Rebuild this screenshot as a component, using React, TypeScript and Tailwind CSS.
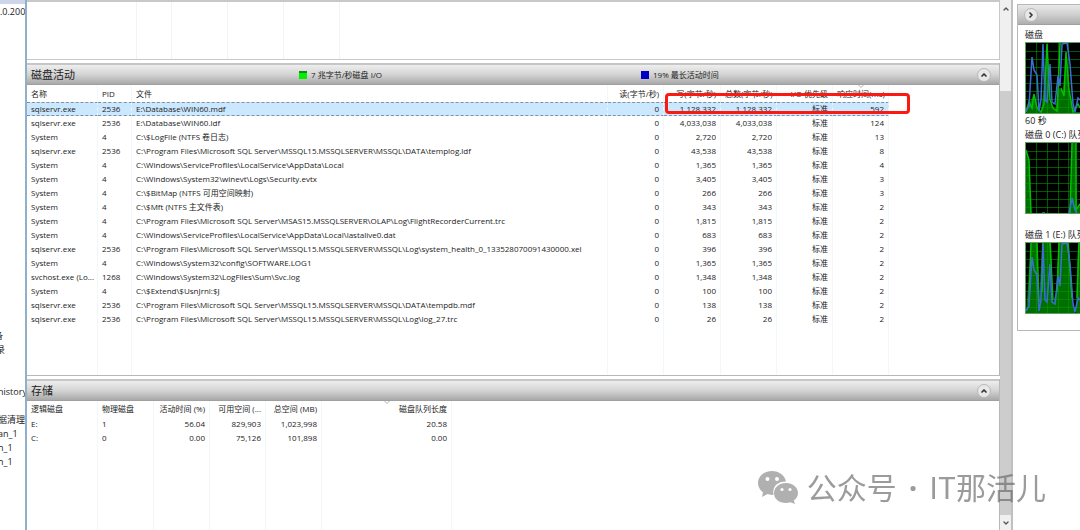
import { ChevronDown, ChevronRight, ChevronUp } from 'lucide-react'

type Activity = {
  name: string
  pid: string
  file: string
  write: string
  time: string
}

const activities: Activity[] = [
  { name: 'sqlservr.exe', pid: '2536', file: 'E:\\Database\\WIN60.mdf', write: '1,128,332', time: '592' },
  { name: 'sqlservr.exe', pid: '2536', file: 'E:\\Database\\WIN60.ldf', write: '4,033,038', time: '124' },
  { name: 'System', pid: '4', file: 'C:\\$LogFile (NTFS 卷日志)', write: '2,720', time: '13' },
  { name: 'sqlservr.exe', pid: '2536', file: 'C:\\Program Files\\Microsoft SQL Server\\MSSQL15.MSSQLSERVER\\MSSQL\\DATA\\templog.ldf', write: '43,538', time: '8' },
  { name: 'System', pid: '4', file: 'C:\\Windows\\ServiceProfiles\\LocalService\\AppData\\Local', write: '1,365', time: '4' },
  { name: 'System', pid: '4', file: 'C:\\Windows\\System32\\winevt\\Logs\\Security.evtx', write: '3,405', time: '3' },
  { name: 'System', pid: '4', file: 'C:\\$BitMap (NTFS 可用空间映射)', write: '266', time: '3' },
  { name: 'System', pid: '4', file: 'C:\\$Mft (NTFS 主文件表)', write: '343', time: '2' },
  { name: 'System', pid: '4', file: 'C:\\Program Files\\Microsoft SQL Server\\MSAS15.MSSQLSERVER\\OLAP\\Log\\FlightRecorderCurrent.trc', write: '1,815', time: '2' },
  { name: 'System', pid: '4', file: 'C:\\Windows\\ServiceProfiles\\LocalService\\AppData\\Local\\lastalive0.dat', write: '683', time: '2' },
  { name: 'sqlservr.exe', pid: '2536', file: 'C:\\Program Files\\Microsoft SQL Server\\MSSQL15.MSSQLSERVER\\MSSQL\\Log\\system_health_0_133528070091430000.xel', write: '396', time: '2' },
  { name: 'System', pid: '4', file: 'C:\\Windows\\System32\\config\\SOFTWARE.LOG1', write: '1,365', time: '2' },
  { name: 'svchost.exe (Lo...', pid: '1268', file: 'C:\\Windows\\System32\\LogFiles\\Sum\\Svc.log', write: '1,348', time: '2' },
  { name: 'System', pid: '4', file: 'C:\\$Extend\\$UsnJrnl:$J', write: '100', time: '2' },
  { name: 'sqlservr.exe', pid: '2536', file: 'C:\\Program Files\\Microsoft SQL Server\\MSSQL15.MSSQLSERVER\\MSSQL\\DATA\\tempdb.mdf', write: '138', time: '2' },
  { name: 'sqlservr.exe', pid: '2536', file: 'C:\\Program Files\\Microsoft SQL Server\\MSSQL15.MSSQLSERVER\\MSSQL\\Log\\log_27.trc', write: '26', time: '2' },
]

const volumes = [
  ['E:', '1', '56.04', '829,903', '1,023,998', '20.58'],
  ['C:', '0', '0.00', '75,126', '101,898', '0.00'],
]

const cell = 'border-r border-[#f1f7fa] px-1 whitespace-nowrap overflow-hidden font-normal'

function RoundButton({ label }: { label: string }) {
  return (
    <button
      aria-label={label}
      className="flex size-3.5 items-center justify-center rounded-full border border-[#b8b8b8] bg-[#e8e8e8]"
    >
      <ChevronUp className="size-2 text-[#333]" strokeWidth={5} />
    </button>
  )
}

function SectionHeader({ title, children }: { title: string; children?: React.ReactNode }) {
  return (
    <div className="grid h-[22px] shrink-0 grid-cols-[268px_342px_1fr_auto] items-center border-t-2 border-b border-t-[#c6c6c6] border-b-[#a0a0a0] bg-linear-to-b from-[#eeeeee] via-[#d4d4d4] to-[#a9a9a9] pr-2 pl-1 text-[#222]">
      <h2 className="text-[11px] leading-4">{title}</h2>
      {children ?? (
        <>
          <span />
          <span />
        </>
      )}
      <RoundButton label={`折叠${title}`} />
    </div>
  )
}

function SortMark() {
  return (
    <svg className="absolute top-0 left-1/2 h-1 w-2 -translate-x-1/2" viewBox="0 0 8 4" fill="none" stroke="#b5b5b5">
      <path d="M1.5 0 4 2.5 6.5 0" />
    </svg>
  )
}

function ActivityTable() {
  return (
    <table className="h-full w-full table-fixed border-separate border-spacing-0 text-[8px] leading-[14px]">
      <colgroup>
        <col className="w-[71px]" />
        <col className="w-[34px]" />
        <col className="w-[476px]" />
        <col className="w-14" />
        <col className="w-[57px]" />
        <col className="w-14" />
        <col className="w-14" />
        <col className="w-14" />
        <col />
      </colgroup>
      <thead>
        <tr className="h-[17px]">
          <th className={`${cell} text-left`}>名称</th>
          <th className={`${cell} text-left`}>PID</th>
          <th className={`${cell} text-left`}>文件</th>
          <th className={`${cell} text-right`}>读(字节/秒)</th>
          <th className={`${cell} text-right`}>写(字节/秒)</th>
          <th className={`${cell} text-right`}>总数(字节/秒)</th>
          <th className={`${cell} text-right`}>I/O 优先级</th>
          <th className={`${cell} relative text-right`}>
            <SortMark />
            响应时间(ms)
          </th>
          <th />
        </tr>
      </thead>
      <tbody>
        {activities.map((a, i) => {
          const td = i === 0 ? `${cell} border-y border-y-[#7d93a8] border-dashed bg-[#cce8ff] leading-3` : cell
          return (
            <tr key={i} className="h-[14px]">
              <td className={td}>{a.name}</td>
              <td className={td}>{a.pid}</td>
              <td className={td}>{a.file}</td>
              <td className={`${td} text-right`}>0</td>
              <td className={`${td} text-right`}>{a.write}</td>
              <td className={`${td} text-right`}>{a.write}</td>
              <td className={`${td} text-right`}>标准</td>
              <td className={`${td} text-right`}>{a.time}</td>
              <td />
            </tr>
          )
        })}
        <tr aria-hidden="true">
          {[0, 1, 2, 3, 4, 5, 6, 7].map((n) => (
            <td key={n} className={cell} />
          ))}
          <td />
        </tr>
      </tbody>
    </table>
  )
}

function StorageTable() {
  const heads = ['逻辑磁盘', '物理磁盘', '活动时间 (%)', '可用空间 (...', '总空间 (MB)', '磁盘队列长度']
  return (
    <table className="h-full w-full table-fixed border-separate border-spacing-0 text-[8px] leading-[14px]">
      <colgroup>
        <col className="w-[71px]" />
        <col className="w-14" />
        <col className="w-14" />
        <col className="w-14" />
        <col className="w-14" />
        <col className="w-[130px]" />
        <col />
      </colgroup>
      <thead>
        <tr className="h-4">
          {heads.map((h, i) => (
            <th key={h} className={`${cell} ${i < 2 ? 'text-left' : 'text-right'} ${i === 5 ? 'relative' : ''}`}>
              {i === 5 && <SortMark />}
              {h}
            </th>
          ))}
          <th />
        </tr>
      </thead>
      <tbody>
        {volumes.map((row) => (
          <tr key={row[0]} className="h-[14px]">
            {row.map((v, i) => (
              <td key={i} className={`${cell} ${i < 2 ? 'text-left' : 'text-right'}`}>{v}</td>
            ))}
            <td />
          </tr>
        ))}
        <tr aria-hidden="true">
          {heads.map((h) => (
            <td key={h} className={cell} />
          ))}
          <td />
        </tr>
      </tbody>
    </table>
  )
}

function Graph({ area, green, blue }: { area: string; green: string; blue: string }) {
  return (
    <svg className="block h-[72px] w-[55px]" viewBox="0 0 55 72" fill="none">
      <rect width="55" height="72" fill="#000" />
      <path d={area} fill="#006e00" />
      <path
        d="M1 9.5H55M1 17.5H55M1 25.5H55M1 33.5H55M1 41.5H55M1 49.5H55M1 57.5H55M1 65.5H55M11.5 0V72M22.5 0V72M33.5 0V72M43.5 0V72"
        stroke="#00a000"
        strokeOpacity=".55"
      />
      <path d={green} stroke="#00c000" strokeWidth="1.5" />
      <path d={blue} stroke="#3c6ed8" strokeWidth="1.5" />
      <path d="M.5 0V72M0 .5H55M0 71.5H55" stroke="#5f9f5f" />
    </svg>
  )
}

const diskBlue = 'M1 69 4 64 7 15 9 28 12 33 14 69 16 58 18 2 20 58 22 60 25 22 27 60 30 62 33 34 35 44 37 2 42 1 45 22 48 62 50 70 53 56 55 58'

export default function App() {
  return (
    <div className="flex h-screen overflow-hidden bg-white font-['Open_Sans','Noto_Sans_CJK_SC',sans-serif] text-[#222]">
      <aside className="flex w-[25px] shrink-0 flex-col overflow-hidden text-[9px] leading-[14px] whitespace-nowrap">
        <div className="h-1 shrink-0 bg-[#ccd5ea]" />
        <p className="mt-px">.0.2000</p>
        <div className="mt-[310px] flex flex-col">
          <p className="-indent-1.5">备</p>
          <p className="-indent-1">录</p>
          <p className="mt-7 -indent-0.5">history</p>
          <p className="mt-[14px] flex justify-end">数据清理</p>
          <p className="-indent-0.5">an_1</p>
          <p className="-indent-0.5">n_1</p>
          <p className="-indent-0.5">n_1</p>
        </div>
      </aside>

      <main className="flex min-w-0 flex-1 flex-col border-l-2 border-[#8fb0c8]">
        <section className="flex h-[60px] shrink-0 border-t-2 border-r border-b border-[#c8c8c8]">
          <div className="w-[110px] border-r border-[#eef5f9]" />
          <div className="w-[35px] border-r border-[#eef5f9]" />
          <div className="w-14 border-r border-[#eef5f9]" />
          <div className="w-14 border-r border-[#eef5f9]" />
          <div className="w-14 border-r border-[#eef5f9]" />
        </section>

        <section className="relative mt-[3px] flex h-[313px] shrink-0 flex-col border-r border-b border-[#b8b8b8]">
          <SectionHeader title="磁盘活动">
            <span className="flex items-center gap-1 text-[8px]">
              <i className="size-2 border-t-2 border-[#128a20] bg-[#00f000]" />7 兆字节/秒磁盘 I/O
            </span>
            <span className="flex items-center gap-1 text-[8px]">
              <i className="size-2 bg-[#0000c0]" />19% 最长活动时间
            </span>
          </SectionHeader>
          <div className="min-h-0 flex-1">
            <ActivityTable />
          </div>
          <div className="absolute top-[30px] left-[638px] h-[21px] w-[245px] rounded-sm border-3 border-[#fb1a12]" />
        </section>

        <section className="mt-[3px] flex min-h-0 flex-1 flex-col border-r border-[#b8b8b8]">
          <SectionHeader title="存储" />
          <div className="min-h-0 flex-1">
            <StorageTable />
          </div>
        </section>
      </main>

      <div className="flex w-[13px] shrink-0 flex-col border-r-2 border-[#c0c0c0] bg-[#f0f0f0]">
        <button aria-label="向上滚动" className="flex h-[18px] items-center justify-center">
          <ChevronUp className="size-2 text-[#555]" strokeWidth={4} />
        </button>
        <div className="mt-[73px] flex-1 bg-[#cdcdcd]" />
        <button aria-label="向下滚动" className="flex h-[15px] items-center justify-center">
          <ChevronDown className="size-2 text-[#555]" strokeWidth={4} />
        </button>
      </div>

      <aside className="mt-1 ml-1 h-[327px] w-[63px] shrink-0 overflow-hidden border-t border-b border-l border-[#b8b8b8] text-[9px] leading-[14px] whitespace-nowrap">
        <div className="flex h-5 items-center border-b border-[#a0a0a0] bg-linear-to-b from-[#e8e8e8] via-[#d0d0d0] to-[#aeaeae] pl-1.5">
          <button
            aria-label="收起图表"
            className="flex size-3.5 items-center justify-center rounded-full border border-[#b8b8b8] bg-[#e8e8e8]"
          >
            <ChevronRight className="size-2 text-[#333]" strokeWidth={5} />
          </button>
        </div>
        <div className="pt-[3px] pl-[7px]">
          <p>磁盘</p>
          <Graph
            area="M1 72 4 62 9 52 12 64 16 70 20 34 22 0 24 60 30 68 34 46 38 48 41 10 44 46 48 70 55 70V72Z"
            green="M1 70 4 60 7 66 9 52 12 66 16 70 19 62 22 2 25 58 28 66 32 69 34 26 35 1M36 46 39 54 41 10 44 48 48 70 53 62 55 66"
            blue={diskBlue}
          />
          <p>60 秒</p>
          <p>磁盘 0 (C:) 队列长度</p>
          <Graph
            area="M1 72V8L4 18 6 72ZM45 72 47 0H51L52 66 55 62V72Z"
            green="M1 8 4 18 6 71M45 72 47 1M51 1V68L55 62"
            blue="M17 71H20M44 71 47 56 50 68 52 71"
          />
          <p className="mt-[14px]">磁盘 1 (E:) 队列长度</p>
          <Graph
            area="M1 72 6 0H12L14 62 17 0H26L28 60 31 50 34 0H44L48 66 51 72 53 0H55V72Z"
            green="M4 60 6 1M12 1 14 60M17 50 18 1M25 1 28 58M32 50 34 1M43 1 47 56M52 56 54 1"
            blue={diskBlue}
          />
        </div>
      </aside>

      <div className="fixed right-[34px] bottom-6 flex items-center gap-2 text-[#666]/65">
        <svg className="h-[34px] w-[42px]" viewBox="0 0 42 34" fill="#b0b0b0">
          <path d="M15 1C7 1 1 6.200 1 13c0 4 2 7 5 9.200L5 27l5.500-3c2 .7 4 .9 6 .9C15 16 21 11.500 29 11.500 28 5.500 22 1 15 1Z" />
          <path d="M29 13c-7 0-12 4.500-12 10.200S22 33 29 33c1.600 0 3-.2 4.400-.7L38 34l-1.200-3.600c2.600-1.800 4.200-4.300 4.200-7.200C41 17.500 36 13 29 13Z" />
          <g fill="#fff">
            <circle cx="10.500" cy="9" r="2" />
            <circle cx="20" cy="9" r="2" />
            <circle cx="25" cy="19.500" r="1.600" />
            <circle cx="33" cy="19.500" r="1.600" />
          </g>
        </svg>
        <p className="font-['Noto_Sans_CJK_SC',sans-serif] text-[30px] leading-9">
          公众号<span className="px-3 font-['Open_Sans',sans-serif] font-bold">·</span>IT那活儿
        </p>
      </div>
    </div>
  )
}
